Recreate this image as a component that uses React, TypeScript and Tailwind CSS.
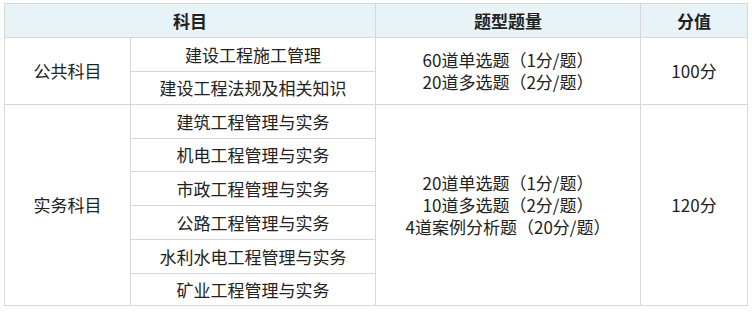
const subjects = [
  "建筑工程管理与实务",
  "机电工程管理与实务",
  "市政工程管理与实务",
  "公路工程管理与实务",
  "水利水电工程管理与实务",
  "矿业工程管理与实务",
];

const rowHeights = ["h-[34px]", "h-[33px]", "h-[34px]", "h-[34px]", "h-[34px]", "h-[32px]"];

const cell = "border border-[#d8d8d8] text-center align-middle";

export default function App() {
  return (
    <div
      className="pl-[4px] pt-[3px] bg-white text-[17px] text-[#222] leading-[22px]"
      style={{ fontFamily: '"Microsoft YaHei", "Noto Sans CJK SC", sans-serif' }}
    >
      <table className="table-fixed border-collapse w-[743px]">
        <colgroup>
          <col className="w-[126px]" />
          <col className="w-[245px]" />
          <col className="w-[265px]" />
          <col className="w-[107px]" />
        </colgroup>
        <thead>
          <tr className="h-[34px] bg-[#e8f3f8]">
            <th colSpan={2} className={`${cell} font-bold`}>科目</th>
            <th className={`${cell} font-bold`}>题型题量</th>
            <th className={`${cell} font-bold`}>分值</th>
          </tr>
        </thead>
        <tbody>
          <tr className="h-[34px]">
            <td rowSpan={2} className={cell}>公共科目</td>
            <td className={cell}>建设工程施工管理</td>
            <td rowSpan={2} className={cell}>
              60道单选题（1分/题）
              <br />
              20道多选题（2分/题）
            </td>
            <td rowSpan={2} className={cell}>100分</td>
          </tr>
          <tr className="h-[33px]">
            <td className={cell}>建设工程法规及相关知识</td>
          </tr>
          {subjects.map((name, i) => (
            <tr key={name} className={rowHeights[i]}>
              {i === 0 && (
                <td rowSpan={6} className={cell}>实务科目</td>
              )}
              <td className={cell}>{name}</td>
              {i === 0 && (
                <>
                  <td rowSpan={6} className={cell}>
                    20道单选题（1分/题）
                    <br />
                    10道多选题（2分/题）
                    <br />
                    4道案例分析题（20分/题）
                  </td>
                  <td rowSpan={6} className={cell}>120分</td>
                </>
              )}
            </tr>
          ))}
        </tbody>
      </table>
    </div>
  );
}
